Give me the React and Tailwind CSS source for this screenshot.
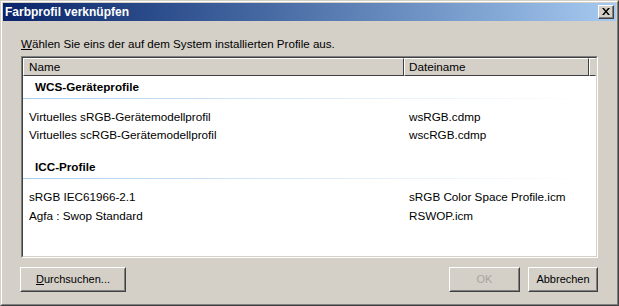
import React from "react";

const rows1 = [
  { name: "Virtuelles sRGB-Gerätemodellprofil", file: "wsRGB.cdmp" },
  { name: "Virtuelles scRGB-Gerätemodellprofil", file: "wscRGB.cdmp" },
];

const rows2 = [
  { name: "sRGB IEC61966-2.1", file: "sRGB Color Space Profile.icm" },
  { name: "Agfa : Swop Standard", file: "RSWOP.icm" },
];

function GroupHeader({ label }) {
  return (
    <div className="flex flex-col">
      <div className="h-[22px] flex items-center pl-[12px] font-bold text-black">{label}</div>
      <div className="h-px w-full bg-gradient-to-r from-[#a9cdee] via-[#dcebf8] to-white" />
    </div>
  );
}

function Row({ name, file, tall }) {
  return (
    <div className={`${tall ? "h-[19px]" : "h-[18px]"} flex items-center`}>
      <div className="w-[382px] pl-[6px] truncate">{name}</div>
      <div className="pl-[4px]">{file}</div>
    </div>
  );
}

function Button({ children, disabled, className = "" }) {
  return (
    <div className={`h-[25px] border border-t-white border-l-white border-b-[#404040] border-r-[#404040] ${className}`}>
      <div className="h-full border border-t-[#d4d0c8] border-l-[#d4d0c8] border-b-[#808080] border-r-[#808080] flex items-center justify-center">
        <span className={disabled ? "text-[#a7a49d]" : "text-black"}>{children}</span>
      </div>
    </div>
  );
}

export default function App() {
  return (
    <div className="w-[619px] h-[306px] bg-[#d4d0c8] border border-t-[#d4d0c8] border-l-[#d4d0c8] border-b-[#404040] border-r-[#404040] font-['Liberation_Sans',sans-serif] text-[11.7px] text-black">
      <div className="w-full h-full border border-t-white border-l-white border-b-[#808080] border-r-[#808080] p-px flex flex-col">
        {/* title bar */}
        <div className="h-[18px] bg-gradient-to-r from-[#0a246a] to-[#a6caf0] flex items-center justify-between pl-[2px] pr-[2px]">
          <span className="text-white font-bold text-[12px] leading-none">Farbprofil verknüpfen</span>
          <div className="w-[16px] h-[14px] bg-[#d4d0c8] border border-t-white border-l-white border-b-[#404040] border-r-[#404040]">
            <div className="w-full h-full border-b border-r border-[#808080] flex items-center justify-center">
              <svg width="8" height="7" viewBox="0 0 8 7">
                <path d="M0 0h2l2 2.5L6 0h2L5 3.5 8 7H6L4 4.5 2 7H0l3-3.5z" fill="#000" />
              </svg>
            </div>
          </div>
        </div>

        <div className="flex-1 flex flex-col px-[18px] pt-[15px]">
          <div className="h-[15px] leading-[15px] text-[11.6px]">
            <span className="underline">W</span>ählen Sie eins der auf dem System installierten Profile aus.
          </div>

          {/* list */}
          <div className="mt-[5px] h-[202px] border border-t-[#808080] border-l-[#808080] border-b-white border-r-white">
            <div className="h-full border border-t-[#404040] border-l-[#404040] border-b-[#d4d0c8] border-r-[#d4d0c8] bg-white flex flex-col">
              <div className="h-[18px] flex bg-[#d4d0c8] shrink-0">
                <div className="w-[381px] border border-t-white border-l-white border-b-[#404040] border-r-[#404040] flex items-center pl-[5px]">
                  Name
                </div>
                <div className="w-[185px] border border-t-white border-l-white border-b-[#404040] border-r-[#404040] flex items-center pl-[4px]">
                  Dateiname
                </div>
                <div className="flex-1 border border-t-white border-l-white border-b-[#404040] border-r-[#d4d0c8]" />
              </div>

              <GroupHeader label="WCS-Geräteprofile" />
              <div className="h-[9px]" />
              {rows1.map((r) => (
                <Row key={r.name} {...r} />
              ))}
              <div className="h-[12px]" />
              <GroupHeader label="ICC-Profile" />
              <div className="h-[8px]" />
              {rows2.map((r) => (
                <Row key={r.name} {...r} tall />
              ))}
            </div>
          </div>

          {/* buttons */}
          <div className="mt-[9px] flex items-center text-[11px]">
            <Button className="w-[106px] -ml-px">
              <span className="underline">D</span>urchsuchen...
            </Button>
            <div className="flex-1" />
            <Button disabled className="w-[71px]">OK</Button>
            <Button className="w-[70px] ml-[8px]">Abbrechen</Button>
          </div>
        </div>
      </div>
    </div>
  );
}
